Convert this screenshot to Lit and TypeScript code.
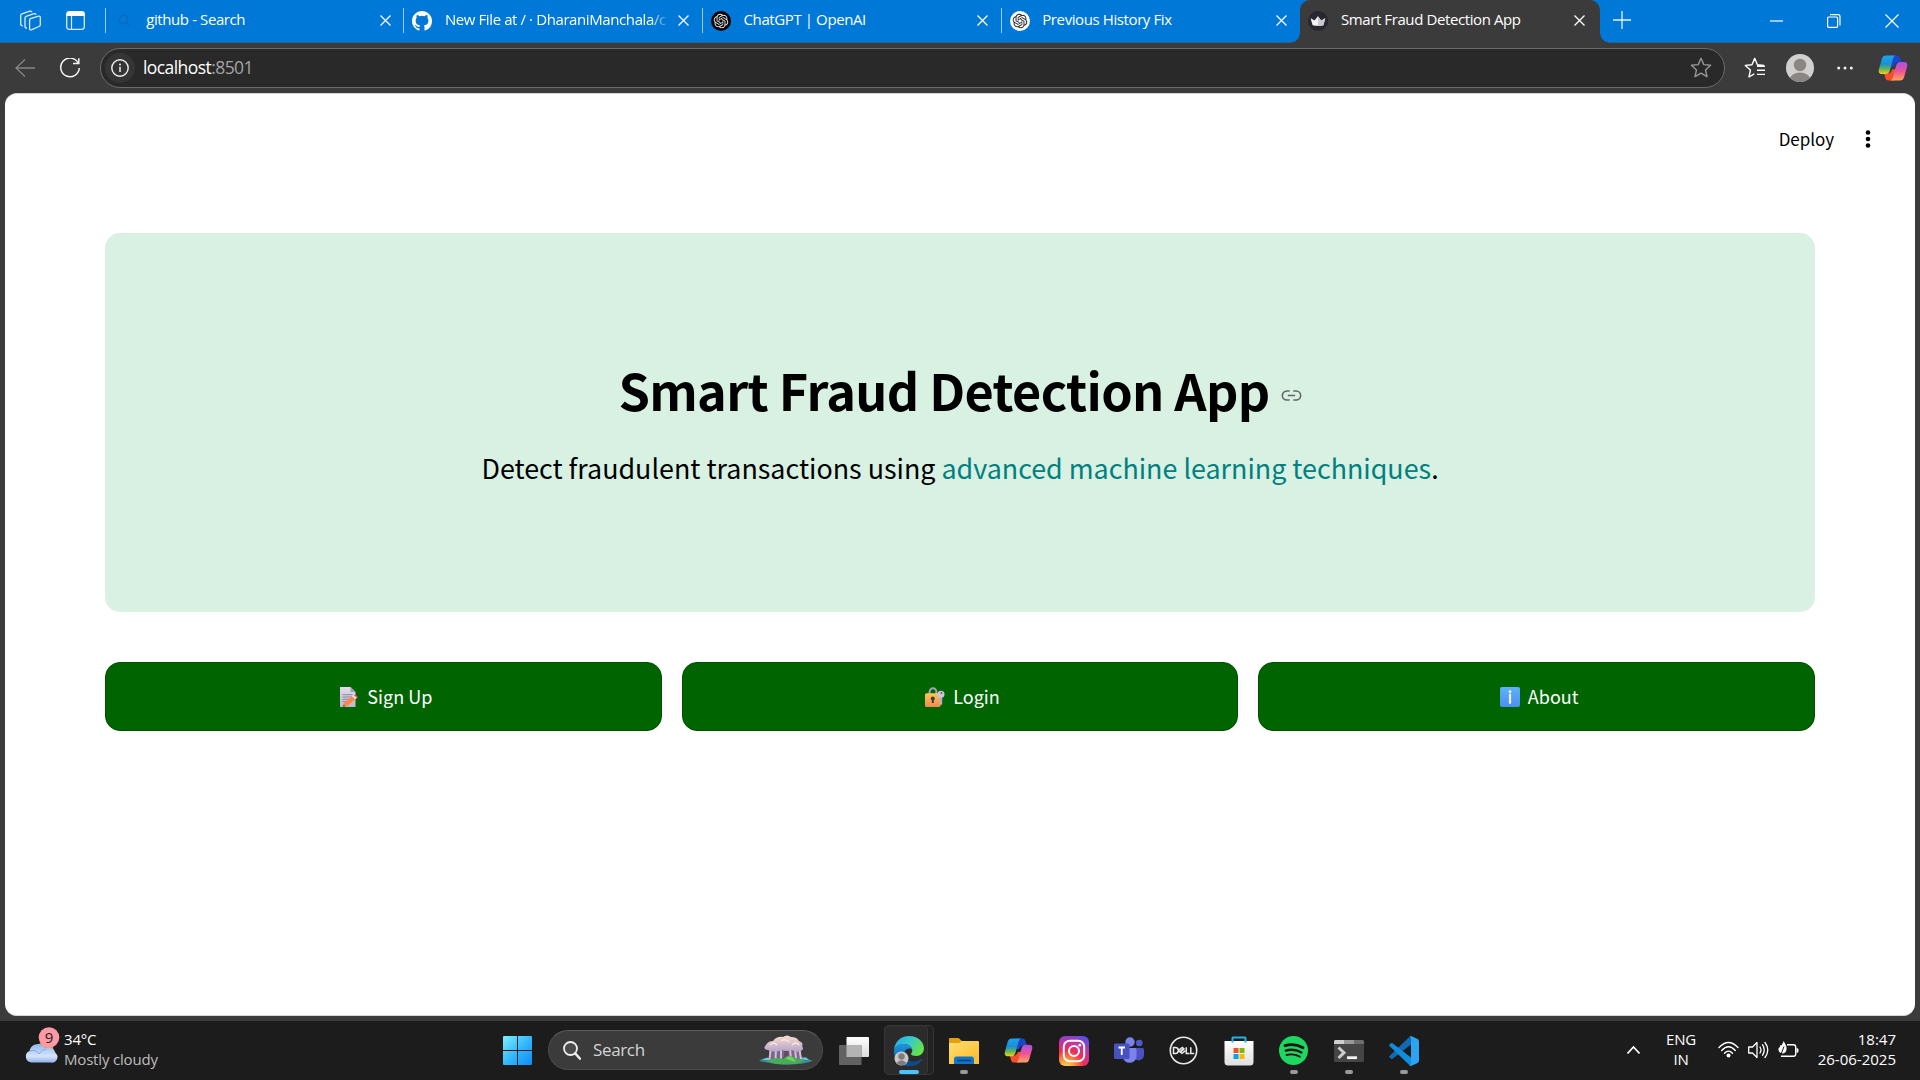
import { LitElement, html, css, nothing } from "lit";
import { customElement, property } from "lit/decorators.js";

const closeIcon = html`<svg class="x" width="11" height="11" viewBox="0 0 11 11"><path d="M.5 .5 10.5 10.5M10.5 .5 .5 10.5" stroke="#fff" stroke-width="1.3" fill="none"/></svg>`;

const openAiMark = (bg: string, fg: string) => html`<svg width="20" height="20" viewBox="0 0 20 20">
  <circle cx="10" cy="10" r="10" fill="${bg}"/>
  <path transform="translate(2.7 2.7) scale(.608)" fill="${fg}" d="M22.2819 9.8211a5.9847 5.9847 0 0 0-.5157-4.9108 6.0462 6.0462 0 0 0-6.5098-2.9A6.0651 6.0651 0 0 0 4.9807 4.1818a5.9847 5.9847 0 0 0-3.9977 2.9 6.0462 6.0462 0 0 0 .7427 7.0966 5.98 5.98 0 0 0 .511 4.9107 6.051 6.051 0 0 0 6.5146 2.9001A5.9847 5.9847 0 0 0 13.2599 24a6.0557 6.0557 0 0 0 5.7718-4.2058 5.9894 5.9894 0 0 0 3.9977-2.9001 6.0557 6.0557 0 0 0-.7475-7.0729zm-9.022 12.6081a4.4755 4.4755 0 0 1-2.8764-1.0408l.1419-.0804 4.7783-2.7582a.7948.7948 0 0 0 .3927-.6813v-6.7369l2.02 1.1686a.071.071 0 0 1 .038.052v5.5826a4.504 4.504 0 0 1-4.4945 4.4944zm-9.6607-4.1254a4.4708 4.4708 0 0 1-.5346-3.0137l.142.0852 4.783 2.7582a.7712.7712 0 0 0 .7806 0l5.8428-3.3685v2.3324a.0804.0804 0 0 1-.0332.0615L9.74 19.9502a4.4992 4.4992 0 0 1-6.1408-1.6464zM2.3408 7.8956a4.485 4.485 0 0 1 2.3655-1.9728V11.6a.7664.7664 0 0 0 .3879.6765l5.8144 3.3543-2.0201 1.1685a.0757.0757 0 0 1-.071 0l-4.8303-2.7865A4.504 4.504 0 0 1 2.3408 7.872zm16.5963 3.8558L13.1038 8.364 15.1192 7.2a.0757.0757 0 0 1 .071 0l4.8303 2.7913a4.4944 4.4944 0 0 1-.6765 8.1042v-5.6772a.79.79 0 0 0-.407-.667zm2.0107-3.0231l-.142-.0852-4.7735-2.7818a.7759.7759 0 0 0-.7854 0L9.409 9.2297V6.8974a.0662.0662 0 0 1 .0284-.0615l4.8303-2.7866a4.4992 4.4992 0 0 1 6.6802 4.66zM8.3065 12.863l-2.02-1.1638a.0804.0804 0 0 1-.038-.0567V6.0742a4.4992 4.4992 0 0 1 7.3757-3.4537l-.142.0805L8.704 5.459a.7948.7948 0 0 0-.3927.6813zm1.0976-2.3654l2.602-1.4998 2.6069 1.4998v2.9994l-2.5974 1.4997-2.6067-1.4997Z"/></svg>`;

const githubMark = html`<svg width="20" height="20" viewBox="0 0 16 16"><path fill="#fff" d="M8 0C3.58 0 0 3.58 0 8c0 3.54 2.29 6.53 5.47 7.59.4.07.55-.17.55-.38 0-.19-.01-.82-.01-1.49-2.01.37-2.53-.49-2.69-.94-.09-.23-.48-.94-.82-1.13-.28-.15-.68-.52-.01-.53.63-.01 1.08.58 1.23.82.72 1.21 1.87.87 2.33.66.07-.52.28-.87.51-1.07-1.78-.2-3.64-.89-3.64-3.95 0-.87.31-1.59.82-2.15-.08-.2-.36-1.02.08-2.12 0 0 .67-.21 2.2.82a7.6 7.6 0 0 1 4 0c1.53-1.04 2.2-.82 2.2-.82.44 1.1.16 1.92.08 2.12.51.56.82 1.27.82 2.15 0 3.07-1.87 3.75-3.65 3.95.29.25.54.73.54 1.48 0 1.07-.01 1.93-.01 2.2 0 .21.15.46.55.38A8.01 8.01 0 0 0 16 8c0-4.42-3.58-8-8-8z"/></svg>`;

const searchFavicon = html`<svg width="20" height="20" viewBox="0 0 20 20"><g fill="none" stroke="#0a68bd" stroke-width="1.3"><circle cx="9.5" cy="8.5" r="4.2"/><path d="M12.6 11.6 16 15"/></g></svg>`;

const crownFavicon = html`<svg width="20" height="20" viewBox="0 0 20 20"><circle cx="10" cy="10" r="10" fill="#262730"/><path d="M2.6 7.2 6.6 9.4 9.9 5.2 13.2 9.4 17.3 7.2 15.4 14.2Q10 15.4 4.6 14.2z" fill="#f4f4f4"/><path d="M9.9 5.2 13.2 9.4 17.3 7.2 15.4 14.2Q13 14.8 10 14.9z" fill="#c9c9cc"/></svg>`;

const copilotMark = (id: string, w: number) => html`<svg width="${w}" height="${w}" viewBox="0 0 30 30">
  <defs>
    <linearGradient id="${id}a" x1="0" y1="0" x2="0" y2="1"><stop offset="0" stop-color="#1aa5f0"/><stop offset=".45" stop-color="#1b8fd6"/><stop offset=".72" stop-color="#5fb457"/><stop offset="1" stop-color="#f5cf1d"/></linearGradient>
    <linearGradient id="${id}b" x1="0" y1="0" x2="0" y2="1"><stop offset="0" stop-color="#a94fe8"/><stop offset=".5" stop-color="#ee5396"/><stop offset="1" stop-color="#fda55c"/></linearGradient>
  </defs>
  <path d="M12 2.500h7c2 0 2.800 1.300 3.300 3l1.200 4h-3c-3 0-4 2-5 4.500l-4-1z" fill="#1a46c8"/>
  <path d="M17 27.500h-6.500c-2 0-2.800-1.300-3.300-3L6 20.500h3.500c3 0 4-2 5-4.500l4 1z" fill="#f4502e"/>
  <path d="M8 2.500H18c-1.600 0-2.400 1.400-3 3.500L12 17c-.9 3-2.200 4-4.400 4H3.500C.8 21 .3 18.600 1 16L4 5.500C4.600 3.500 6 2.500 8 2.500z" fill="url(#${id}a)"/>
  <path d="M22 27.500H12c1.600 0 2.400-1.400 3-3.500L18 13c.9-3 2.200-4 4.400-4h4.100c2.700 0 3.200 2.400 2.500 5L26 24.500c-.6 2-2 3-4 3z" fill="url(#${id}b)"/>
</svg>`;

const starOutline = (stroke: string) => html`<svg width="22" height="22" viewBox="0 0 22 22"><path d="M11 1.300 13.800 7.600 20.600 8.300 15.500 12.900 17 19.700 11 16.200 5 19.700 6.500 12.900 1.400 8.300 8.200 7.600z" fill="none" stroke="${stroke}" stroke-width="1.400" stroke-linejoin="round"/></svg>`;

const noteIcon = html`<svg width="20" height="20" viewBox="0 0 20 20"><defs><linearGradient id="np" x1="0" y1="0" x2="0" y2="1"><stop offset="0" stop-color="#e4dcee"/><stop offset="1" stop-color="#bcb6cb"/></linearGradient></defs>
  <path d="M1 0h10.500L16.500 5v15H1z" fill="url(#np)"/><path d="M11.500 0v5h5z" fill="#a79fb8"/>
  <path d="M3.500 7.700h10M3.500 10h9.500M3.500 12.300h6.500M3.500 14.600h3.500" stroke="#8d87a3" stroke-width="1"/>
  <path d="M4 19.800 5.200 15.900 13 9.200 16.300 12.300 8.300 19z" fill="#ff8840"/><path d="M13 9.200 15 7.700 18.300 10.800 16.300 12.300z" fill="#f0dfe4"/><path d="M14.700 8Q16.200 7.200 17.800 8.600T18.300 10.900z" fill="#f4414f"/><path d="M4 19.800 4.700 17.600 6.300 19.200z" fill="#5a4152"/></svg>`;

const lockIcon = html`<svg width="20" height="20" viewBox="0 0 20 20"><defs><linearGradient id="lk" x1="0" y1="0" x2="0" y2="1"><stop offset="0" stop-color="#fcc850"/><stop offset="1" stop-color="#f08a4e"/></linearGradient></defs>
  <path d="M4.600 8V5a3.400 3.800 0 0 1 6.800 0v3" fill="none" stroke="#aaa3bb" stroke-width="2"/><rect x="0" y="6.200" width="15.500" height="13.800" rx="1.600" fill="url(#lk)"/>
  <circle cx="7.800" cy="11.600" r="2" fill="#43334c"/><path d="M7 12h1.600l.3 4H6.700z" fill="#43334c"/>
  <path d="M14.700 10h2.500v7l-1 1.300-1.500-1.300z" fill="#b7aecb"/><circle cx="16" cy="7.200" r="3.500" fill="#cdc4dc"/><circle cx="16.400" cy="5.900" r=".9" fill="#574868"/></svg>`;

const infoIcon = html`<svg width="20" height="20" viewBox="0 0 20 20"><defs><linearGradient id="inf" x1="0" y1="0" x2="0" y2="1"><stop offset="0" stop-color="#5fb2fb"/><stop offset="1" stop-color="#4b8ff0"/></linearGradient></defs><rect width="20" height="20" rx="2" fill="url(#inf)"/><circle cx="10" cy="4.700" r="1.400" fill="#f4eef9"/><path d="M10 7.500V16" stroke="#f4eef9" stroke-width="2.200" stroke-linecap="round"/></svg>`;

const sheet = css`
  :host { display: block; }
  * { box-sizing: border-box; }
  svg { display: block; flex: none; }
`;

@customElement("browser-tab")
class BrowserTab extends LitElement {
  @property() label = "";
  @property({ type: Boolean }) active = false;
  @property({ attribute: false }) icon: unknown = nothing;
  static styles = [sheet, css`
    :host { flex: none; width: 298.700px; height: 43px; }
    .tab { display: flex; align-items: center; height: 41px; padding-left: 7px; border-left: 1px solid transparent; }
    .sep { width: 1px; height: 25px; margin: 0 8px 0 -8.500px; background: #9ccbf1; flex: none; }
    .sep.off { background: none; }
    .name { margin: -3px 0 0 12.500px; width: 225px; overflow: hidden; white-space: nowrap; font: 15px/24px "Open Sans", sans-serif; letter-spacing: -.4px; color: #fff; }
    .name.long { -webkit-mask-image: linear-gradient(90deg, #000 205px, transparent 225px); }
    .x { margin-left: 8.500px; }
  `];
  render() {
    return html`<div class="tab"><span class="sep ${this.active ? "off" : ""}"></span>
      ${this.icon}<span class="name ${this.label.length > 30 ? "long" : ""}">${this.label}</span>${closeIcon}</div>`;
  }
}

@customElement("browser-chrome")
class BrowserChrome extends LitElement {
  static styles = [sheet, css`
    .strip { display: flex; height: 43px; background: #0078d7; border-bottom: 1px solid #20639f; }
    .left { display: flex; align-items: center; gap: 24.500px; width: 105.200px; padding: 0 0 2px 20px; flex: none; }
    .active { position: relative; width: 300px; height: 43px; background: #3b3b3b; border-radius: 10px 10px 0 0; flex: none; }
    .active::before, .active::after { content: ""; position: absolute; bottom: 0; width: 10px; height: 10px; }
    .active::before { left: -10px; background: radial-gradient(circle at 0 0, transparent 9.500px, #3b3b3b 10px); }
    .active::after { right: -10px; background: radial-gradient(circle at 100% 0, transparent 9.500px, #3b3b3b 10px); }
    .plus { margin: 11px 0 0 13px; }
    .win { display: flex; align-items: center; margin-left: auto; padding: 0 21.500px 0 0; gap: 44px; }
    .bar { display: flex; align-items: center; height: 50px; background: #3b3b3b; padding: 0 12px 0 15px; }
    .reload { margin: 0 20px 0 25px; }
    .pill { display: flex; align-items: center; width: 1625px; height: 40px; border: 1px solid #6c6c6c; border-radius: 20px; background: #292929; padding: 0 12px 0 4px; }
    .site { display: grid; place-items: center; width: 30px; height: 30px; border-radius: 50%; background: #353535; margin-right: 8px; }
    .url { font: 17.500px/30px "Open Sans", sans-serif; letter-spacing: -.57px; color: #fff; flex: 1; margin-top: -2px; }
    .port { color: #a4a4a4; }
    .fav { margin-left: 19px; } .avatar { margin-left: 20px; } .dots { margin-left: 23px; } .cop { margin-left: auto; }
  `];
  render() {
    return html`
    <div class="strip">
      <div class="left">
        <svg width="21" height="21" viewBox="0 0 21 21"><g fill="none" stroke="#d9ecfb" stroke-width="1.300" stroke-linejoin="round"><path d="M10.500 8.700 18.500 6.200Q20.300 5.800 20.300 7.600V14.800Q20.300 16 19 16.500L11.800 19.700Q9.600 20.500 9.600 18.400V10Q9.600 9 10.500 8.700z"/><path d="M7 18Q5 18.200 5 16.200V8Q5 6.700 6.200 6.300L14 3.700Q15.700 3.200 16.200 4.800"/><path d="M2.800 15.800Q.7 15.800 .7 13.800V5.500Q.7 4.300 1.900 3.900L9.700 1.200Q11.300.7 12 2.200"/></g></svg>
        <svg width="19" height="19" viewBox="0 0 19 19"><rect x=".7" y=".7" width="17.600" height="17.600" rx="2.500" fill="none" stroke="#d9ecfb" stroke-width="1.300"/><path d="M.5 5V3Q.5.500 3 .5h13Q18.500.5 18.500 3V5z" fill="#fff"/><path d="M5.500 5V18" stroke="#d9ecfb" stroke-width="1.200"/></svg>
      </div>
      <browser-tab label="github - Search" .icon=${searchFavicon}></browser-tab>
      <browser-tab label="New File at / · DharaniManchala/c" .icon=${githubMark}></browser-tab>
      <browser-tab label="ChatGPT | OpenAI" .icon=${openAiMark("#000", "#e8e8e8")}></browser-tab>
      <browser-tab label="Previous History Fix" .icon=${openAiMark("#fff", "#222")}></browser-tab>
      <div class="active"><browser-tab active label="Smart Fraud Detection App" .icon=${crownFavicon}></browser-tab></div>
      <svg class="plus" width="18" height="18" viewBox="0 0 18 18"><path d="M9 0V18M0 9H18" stroke="#e6f2fc" stroke-width="1.300"/></svg>
      <div class="win">
        <svg width="13" height="13" viewBox="0 0 13 13"><path d="M0 6H13" stroke="#fff" stroke-width="1.200"/></svg>
        <svg width="14" height="14" viewBox="0 0 14 14"><g fill="none" stroke="#fff" stroke-width="1.200"><rect x=".6" y="3" width="10" height="10.300" rx="1"/><path d="M3 .7H11Q13 .7 13 2.700V11.500"/></g></svg>
        <svg width="14" height="14" viewBox="0 0 14 14"><path d="M.5 .5 13.500 13.500M13.500 .5 .5 13.500" stroke="#fff" stroke-width="1.200"/></svg>
      </div>
    </div>
    <div class="bar">
      <svg width="20" height="18" viewBox="0 0 20 18"><path d="M10 .500 1 9 10 17.500M1 9H20" fill="none" stroke="#858585" stroke-width="1.300"/></svg>
      <svg class="reload" width="20" height="20" viewBox="0 0 20 20"><path d="M18 4.600A9.300 9.300 0 1 0 19.300 10M18.800 .3V5.500H13" fill="none" stroke="#f5f5f5" stroke-width="1.500"/></svg>
      <div class="pill">
        <div class="site"><svg width="18" height="18" viewBox="0 0 18 18"><circle cx="9" cy="9" r="8.200" fill="none" stroke="#f0f0f0" stroke-width="1.400"/><path d="M9 7.700V13" stroke="#f0f0f0" stroke-width="1.500"/><circle cx="9" cy="5.400" r="1" fill="#f0f0f0"/></svg></div>
        <div class="url">localhost<span class="port">:8501</span></div>
        ${starOutline("#989898")}
      </div>
      <svg class="fav" width="22" height="22" viewBox="0 0 22 22"><path d="M20 8.400 13.400 7.700 10.700 1.300 8 7.700 1.300 8.400 6.400 13 5 20 10.300 16.800M13 9.200H21M13 13.300H21M13 17.400H21" fill="none" stroke="#fff" stroke-width="1.400" stroke-linejoin="round"/></svg>
      <svg class="avatar" width="28" height="28" viewBox="0 0 28 28"><defs><clipPath id="av"><circle cx="14" cy="14" r="14"/></clipPath></defs><g clip-path="url(#av)"><rect width="28" height="28" fill="#d2d0ce"/><circle cx="14" cy="11" r="6.200" fill="#8a8683"/><ellipse cx="14" cy="25" rx="10" ry="6.500" fill="#8a8683"/></g></svg>
      <svg class="dots" width="16" height="4" viewBox="0 0 16 4"><g fill="#f0f0f0"><circle cx="1.700" cy="2" r="1.500"/><circle cx="8" cy="2" r="1.500"/><circle cx="14.300" cy="2" r="1.500"/></g></svg>
      <div class="cop">${copilotMark("t", 30)}</div>
    </div>`;
  }
}

@customElement("app-page")
class AppPage extends LitElement {
  static styles = [sheet, css`
    :host { height: 928px; background: #3b3b3b; padding: 0 5px 5px; font-family: "Noto Sans CJK SC", sans-serif; color: #000; }
    .page { height: 923px; background: #fff; border-radius: 12px; padding: 0 100px; border-top: 1px solid #d6d6d6; border-bottom: 1px solid #d6d6d6; }
    .head { display: flex; justify-content: flex-end; align-items: center; gap: 31px; height: 90px; margin-right: -56px; font-size: 17px; }
    .head span { margin-top: -2px; letter-spacing: -.05px; }
    .hero { display: flex; flex-direction: column; align-items: center; height: 379px; margin-top: 49px; border-radius: 15px; background: #d9f1e3; padding-top: 117px; }
    h1 { display: flex; align-items: center; gap: 11px; margin: 0; font-size: 50.400px; line-height: 80px; font-weight: 700; letter-spacing: -.68px; }
    .link { margin-top: 11px; }
    p { margin: 8px 0 0; font-size: 26.870px; line-height: 60px; }
    .tech { color: #008080; }
    .row { display: grid; grid-template-columns: repeat(3, 1fr); gap: 20px; margin-top: 50px; }
    .btn { display: flex; align-items: center; justify-content: center; gap: 8px; height: 69px; padding-left: 5px; border-radius: 15px; border: 1px solid #005000; background: #006400; color: #fff; font-size: 18px; }
    .btn span { margin-top: -2px; }
  `];
  render() {
    return html`<div class="page">
      <div class="head"><span>Deploy</span><svg width="6" height="18" viewBox="0 0 6 18"><circle cx="3" cy="2.500" r="2.300"/><circle cx="3" cy="9" r="2.300"/><circle cx="3" cy="15.500" r="2.300"/></svg></div>
      <div class="hero">
        <h1>Smart Fraud Detection App<svg class="link" width="21" height="11" viewBox="0 0 22 12"><path d="M9 1H6A5 5 0 0 0 6 11H9M13 1H16A5 5 0 0 1 16 11H13M7 6H15" fill="none" stroke="#5d6662" stroke-width="1.700"/></svg></h1>
        <p>Detect fraudulent transactions using <span class="tech">advanced machine learning techniques</span>.</p>
      </div>
      <div class="row">
        <div class="btn">${noteIcon}<span>Sign Up</span></div>
        <div class="btn">${lockIcon}<span>Login</span></div>
        <div class="btn">${infoIcon}<span>About</span></div>
      </div>
    </div>`;
  }
}

const edgeIcon = html`<svg width="30" height="30" viewBox="0 0 30 30"><defs>
  <linearGradient id="e1" x1="0" y1="0" x2="1" y2=".5"><stop offset="0" stop-color="#24a5e8"/><stop offset=".5" stop-color="#34c9d0"/><stop offset="1" stop-color="#66e04b"/></linearGradient>
  <linearGradient id="e2" x1="0" y1="0" x2="0" y2="1"><stop offset="0" stop-color="#1e95e0"/><stop offset="1" stop-color="#0a57a6"/></linearGradient></defs>
  <path d="M0 14C1 5 7 0 15 0c9 0 15 6 15 12.500 0 4.500-3.500 7.500-7.500 7.500-3 0-5.500-.8-5.500-2 0-.8 1.300-1.500 1.300-3.500C18.300 11 14.500 8 10 8 5 8 1 11 0 14z" fill="url(#e1)"/>
  <path d="M0 14C1 10.500 5 8 9.500 8c5 0 8.500 3 8.800 5.800C17 12.500 14.500 12 12.500 13.500 7.500 17 10 25 17 29.800 7 31-1 24 0 14z" fill="url(#e2)"/>
  <path d="M12 15C9.500 22 15 26 20 25.500c3.500-.2 6-1.500 7.500-2.500 .6-.3 1 .2.700.7C25.500 28 21 30 17 30 10 28 7.500 20 12 15z" fill="#114a8b"/>
  <circle cx="7.500" cy="22.500" r="7" fill="#c9c8c6"/><circle cx="7.500" cy="20.500" r="3.200" fill="#807d7a"/><path d="M2.500 27Q7.500 21.500 12.500 27Q7.500 31.500 2.500 27z" fill="#807d7a"/></svg>`;

const apps: { icon: unknown; dot?: boolean; edge?: boolean }[] = [
  { icon: html`<svg width="30" height="28" viewBox="0 0 30 28"><defs><linearGradient id="tv" x1="0" y1="0" x2="0" y2="1"><stop offset="0" stop-color="#fff"/><stop offset="1" stop-color="#dcdcdc"/></linearGradient></defs><rect x="7.500" y="0" width="22.500" height="20" rx="1" fill="url(#tv)"/><rect x="0" y="8" width="22.500" height="20" rx="1" fill="#626262"/><path d="M7.500 8H22.500V20H7.500z" fill="#b4b4b4"/></svg>` },
  { edge: true, icon: edgeIcon },
  { dot: true, icon: html`<svg width="30" height="26" viewBox="0 0 30 26"><defs><linearGradient id="fo" x1="0" y1="0" x2="1" y2="1"><stop offset="0" stop-color="#ffdf6f"/><stop offset="1" stop-color="#fbb92c"/></linearGradient></defs><path d="M0 1Q0 0 1 0H9.500L13 3V8H0z" fill="#e3a008"/><path d="M0 5H10L13 3H29Q30 3 30 4V26H0z" fill="url(#fo)"/><path d="M5 26V21Q5 18.500 7.500 18.500H22.500Q25 18.500 25 21V26z" fill="#1173c9"/><path d="M9 22.500H21.500" stroke="#063f7c" stroke-width="1.500" stroke-linecap="round"/></svg>` },
  { icon: copilotMark("b", 29) },
  { icon: html`<svg width="30" height="30" viewBox="0 0 30 30"><defs><radialGradient id="ig" cx=".25" cy="1.050" r="1.150"><stop offset="0" stop-color="#ffdb66"/><stop offset=".25" stop-color="#fb9338"/><stop offset=".5" stop-color="#ee2e53"/><stop offset=".75" stop-color="#c732a4"/><stop offset="1" stop-color="#5a4fe0"/></radialGradient></defs><rect width="30" height="30" rx="6" fill="url(#ig)"/><g fill="none" stroke="#fff" stroke-width="2"><rect x="4.800" y="4.800" width="20.400" height="20.400" rx="6"/><circle cx="15" cy="15" r="5"/></g><circle cx="20.800" cy="9.200" r="1.400" fill="#fff"/></svg>` },
  { icon: html`<svg width="30" height="28" viewBox="0 0 30 28"><circle cx="25.300" cy="6" r="3.300" fill="#5059c9"/><path d="M20 11H28.500Q30 11 30 12.500V18A5.500 5.500 0 0 1 21 22z" fill="#4a52c2"/><circle cx="16" cy="5" r="4.700" fill="#7b83eb"/><path d="M9 11H21.500Q22.500 11 22.500 12.500V20A7 7 0 0 1 9 21z" fill="#7b83eb"/><rect x="0" y="6.500" width="15.500" height="15.500" rx="1.500" fill="#4652bd"/><path d="M4.500 10.500H11M7.750 10.500V18" stroke="#fff" stroke-width="1.800" fill="none"/></svg>` },
  { icon: html`<svg width="29" height="29" viewBox="0 0 29 29"><circle cx="14.500" cy="14.500" r="13.200" fill="none" stroke="#eaeaea" stroke-width="1.600"/><g fill="none" stroke="#eaeaea" stroke-width="1.500"><path d="M4.500 11.500H6.300A2.900 2.900 0 0 1 6.300 17.500H4.500z"/><path d="M9.300 14.600 13.300 11.500 14.800 12.700 11 15.700M11.500 16 15.200 13M9.300 14.600 13 17.400 16.500 14.700"/><path d="M17.300 11.300V17.400H20.500M21.800 11.300V17.400H25.200"/></g></svg>` },
  { icon: html`<svg width="30" height="30" viewBox="0 0 30 30"><defs><linearGradient id="st" x1="0" y1="0" x2="0" y2="1"><stop offset="0" stop-color="#fff"/><stop offset="1" stop-color="#dedede"/></linearGradient></defs><path d="M.5 5H29.500V26Q29.500 29.500 26 29.500H4Q.5 29.500 .5 26z" fill="url(#st)"/><path d="M8.500 6.500V2Q8.500 1.500 9 1.500H21Q21.500 1.500 21.500 2V6.500" fill="none" stroke="#20b2e8" stroke-width="2"/><path d="M9.500 12H14.500V17H9.500z" fill="#f25022"/><path d="M15.500 12H20.500V17H15.500z" fill="#7fba00"/><path d="M9.500 18H14.500V23H9.500z" fill="#00a4ef"/><path d="M15.500 18H20.500V23H15.500z" fill="#ffb900"/></svg>` },
  { dot: true, icon: html`<svg width="29" height="29" viewBox="0 0 29 29"><circle cx="14.500" cy="14.500" r="14.500" fill="#1ed760"/><g fill="none" stroke="#151515" stroke-linecap="round"><path d="M6 9.700Q15.500 7 24 11.700" stroke-width="2.800"/><path d="M6.800 14.600Q15 12.300 22.500 16.400" stroke-width="2.300"/><path d="M7.500 19Q14.500 17.200 20.800 20.700" stroke-width="1.900"/></g></svg>` },
  { dot: true, icon: html`<svg width="30" height="22" viewBox="0 0 30 22"><rect width="30" height="22" rx="1.500" fill="#454545"/><path d="M0 4V1.500Q0 0 1.500 0H10V4z" fill="#cfcfcf"/><path d="M10 0H20V4H10z" fill="#999"/><path d="M20 0H28.500Q30 0 30 1.500V4H20z" fill="#6e6e6e"/><path d="M4.500 7.500 10 12.700 4.500 18" fill="none" stroke="#ccc" stroke-width="3"/><path d="M13 17.700H23" stroke="#f3f3f3" stroke-width="2.800"/></svg>` },
  { dot: true, icon: html`<svg width="30" height="30" viewBox="0 0 30 30"><path d="M22 8.500 3.500 22.800Q2.700 23.400 2 22.800L.4 21.300Q-.2 20.600.5 20L20 1.200Q21 .3 22.500 .2z" fill="#0f6cb4"/><path d="M22 21.500 3.500 7.200Q2.700 6.600 2 7.200L.4 8.700Q-.2 9.400.5 10L20 28.800Q21 29.700 22.500 29.800z" fill="#128bdb"/><path d="M22 0 28.600 3Q30 3.700 30 5.200V24.800Q30 26.300 28.600 27L22 30Q21.500 30 20.300 29 22 29.500 22 27.500V2.500Q22 .5 20.300 1z" fill="#2ba5f2"/></svg>` },
];

@customElement("task-bar")
class TaskBar extends LitElement {
  static styles = [sheet, css`
    :host { height: 59px; background: #1c1c1c; color: #fff; font: 15px/20px "Open Sans", sans-serif; letter-spacing: -.18px; }
    .bar { display: flex; height: 59px; }
    .weather { display: flex; width: 502.500px; padding: 8px 0 0 23.500px; gap: 4.500px; }
    .sub { color: #bdbdbd; }
    .weather svg { margin-top: -3px; }
    .start { margin-top: 15px; }
    .search { display: flex; align-items: center; width: 275px; height: 40px; margin: 9px 3.500px 0 16px; padding: 0 9px 0 14.500px; border-radius: 20px; background: #3b3b3b; border: 1px solid #4a4a4a; border-top-color: #5c5c5c; font-size: 17px; color: #d4d4d4; letter-spacing: -.35px; }
    .search span { flex: 1; margin-left: 12px; }
    .app { display: grid; place-items: center; position: relative; width: 55px; height: 59px; flex: none; }
    .app > svg { position: relative; }
    .dot { position: absolute; left: 23.500px; top: 49px; width: 8px; height: 4px; border-radius: 2px; background: #9a9a9a; }
    .tile { position: absolute; left: 2.500px; top: 4px; width: 50px; height: 50px; border-radius: 5px; border: 1px solid #373737; }
    .tile.front { width: 44px; background: #2b2b2b; }
    .tile.back { background: #222; }
    .dot.on { left: 17.500px; width: 20px; background: #4cc2ff; }
    .tray { display: flex; align-items: center; margin-left: auto; padding: 0 24px 2px 0; }
    .lang { margin: -1px 20.500px 0 24.500px; text-align: center; width: 32px; }
    .sys { display: flex; gap: 9px; width: 81px; margin-right: 16.500px; }
    .clock { text-align: right; width: 81px; letter-spacing: 0; margin-top: -2px; }
  `];
  render() {
    return html`<div class="bar">
      <div class="weather">
        <svg width="36" height="40" viewBox="0 0 36 40"><defs><linearGradient id="cl" x1="0" y1="0" x2="0" y2="1"><stop offset="0" stop-color="#90b8f2"/><stop offset=".65" stop-color="#d6e4fa"/><stop offset="1" stop-color="#8db0ea"/></linearGradient></defs>
          <circle cx="21" cy="24" r="8.500" fill="#f48a1c"/><path d="M7.500 36.500A6 6 0 0 1 5.500 25 8.500 8.500 0 0 1 21 22 7.500 7.500 0 0 1 31.500 27 5.500 5.500 0 0 1 26.500 36.500z" fill="url(#cl)"/><path d="M6 25Q12 23 15 28Q18 23 22 23" fill="none" stroke="#84aaec"/>
          <circle cx="25" cy="11.500" r="10.300" fill="#ff99a4"/><text x="25" y="17" text-anchor="middle" font-family="Open Sans, sans-serif" font-size="15" fill="#1c1c1c">9</text></svg>
        <div><div>34°C</div><div class="sub">Mostly cloudy</div></div>
      </div>
      <svg class="start" width="29" height="29" viewBox="0 0 29 29"><defs><linearGradient id="wi" gradientUnits="userSpaceOnUse" x1="0" y1="0" x2="29" y2="29"><stop offset="0" stop-color="#7bf0ff"/><stop offset=".5" stop-color="#35b9fb"/><stop offset="1" stop-color="#0c8cf5"/></linearGradient></defs><path d="M1 0H14V14H0V1Q0 0 1 0zM15 0H28Q29 0 29 1V14H15zM0 15H14V29H1Q0 29 0 28zM15 15H29V28Q29 29 28 29H15z" fill="url(#wi)"/></svg>
      <div class="search">
        <svg width="18" height="19" viewBox="0 0 18 19"><circle cx="7.500" cy="7.500" r="6.500" fill="#4b4b4b" stroke="#eee" stroke-width="1.800"/><path d="M12.200 12.400 17 17.700" stroke="#eee" stroke-width="2.400" stroke-linecap="round"/></svg>
        <span>Search</span>
        <svg width="54" height="30" viewBox="0 0 54 30"><defs><linearGradient id="tr" x1="0" y1="0" x2="0" y2="1"><stop offset="0" stop-color="#f8dcd0"/><stop offset="1" stop-color="#b3a3cb"/></linearGradient></defs>
          <path d="M0 26Q5 22 9 24Q12 20 18 23L42 22Q46 21 49 24L54 26Q40 31 16 29z" fill="#3a8b8c"/><path d="M3 25 8 22.500 13 25zM40 24 47 22.500 50 25z" fill="#7cc4ea"/>
          <path d="M10 12H43L41 24H10z" fill="#766990"/><path d="M12 12 10.500 24M17 13 16.500 25M22 13V25M31 13 32 25M36 13 37 24M40 12 42 24" stroke="#dbbccc" stroke-width="2"/><path d="M24 13Q27 19 23 25H31Q28 19 30 13z" fill="#624b63"/>
          <path d="M9 15Q3 14 7 10 9 6 14 6 18 1 24 2 28-1 32 2 38 2 40 6 45 8 43 11 46 15 41 16 37 18 33 15 27 17 23 15 15 18 9 15z" fill="url(#tr)"/><path d="M11 10Q15 6 18 10M22 6Q26 3 30 7M33 10Q37 6 40 10" stroke="#fce5d7" stroke-width="1.300" fill="none"/>
          <path d="M7 26Q18 21 24 24Q28 19 34 22L46 26Q28 33 7 26z" fill="#49ad57"/><path d="M27 24Q29 19 34 23L37 27z" fill="#77cf66"/></svg>
      </div>
      ${apps.map(a => html`<div class="app">${a.edge ? html`<i class="tile back"></i><i class="tile front"></i><i class="dot on"></i>` : nothing}${a.icon}${a.dot ? html`<i class="dot"></i>` : nothing}</div>`)}
      <div class="tray">
        <svg width="15" height="10" viewBox="0 0 15 10"><path d="M1.500 8.500 7.500 2 13.500 8.500" fill="none" stroke="#fff" stroke-width="1.800"/></svg>
        <div class="lang">ENG<br>IN</div>
        <div class="sys">
          <svg width="21" height="18" viewBox="0 0 21 18"><g fill="none" stroke="#fff" stroke-width="1.400" stroke-linecap="round"><path d="M1 6.500Q10.500-3.500 20 6.500M3.700 9.400Q10.500 2.200 17.300 9.400M6.500 12.200Q10.500 8 14.500 12.200"/></g><circle cx="10.500" cy="14.600" r="2" fill="#fff"/></svg>
          <svg width="21" height="18" viewBox="0 0 21 18"><g fill="none" stroke="#fff" stroke-width="1.300" stroke-linejoin="round" stroke-linecap="round"><path d="M.7 6H4.500L9 1.500V16.500L4.500 12H.7zM12 6Q14 9 12 12M14.500 3.700Q18 9 14.500 14.300M17 1.500Q22.500 9 17 16.500"/></g></svg>
          <svg width="21" height="18" viewBox="0 0 21 18"><path d="M9 3.700H15.500Q17.700 3.700 17.700 6V13Q17.700 15.300 15.500 15.300H3" fill="none" stroke="#fff" stroke-width="1.400"/><path d="M18.500 7.300H19.500Q20.500 7.300 20.500 9.500T19.500 11.700H18.500z" fill="#fff"/><path d="M5.500 0Q9 5 8.500 8.500 8 12 5 12.500 0 12 .5 7.500 2 6 2.500 4 4 5 4.200 3 5.300 2 5.500 0z" fill="#fff"/><path d="M6 5.500 3.500 12 2 15.500" stroke="#1c1c1c" fill="none"/></svg>
        </div>
        <div class="clock">18:47<br>26-06-2025</div>
      </div>
    </div>`;
  }
}

@customElement("app-root")
class AppRoot extends LitElement {
  static styles = [sheet, css`
    :host { width: 1920px; height: 1080px; overflow: hidden; background: #3b3b3b; }
  `];
  render() {
    return html`<browser-chrome></browser-chrome><app-page></app-page><task-bar></task-bar>`;
  }
}
